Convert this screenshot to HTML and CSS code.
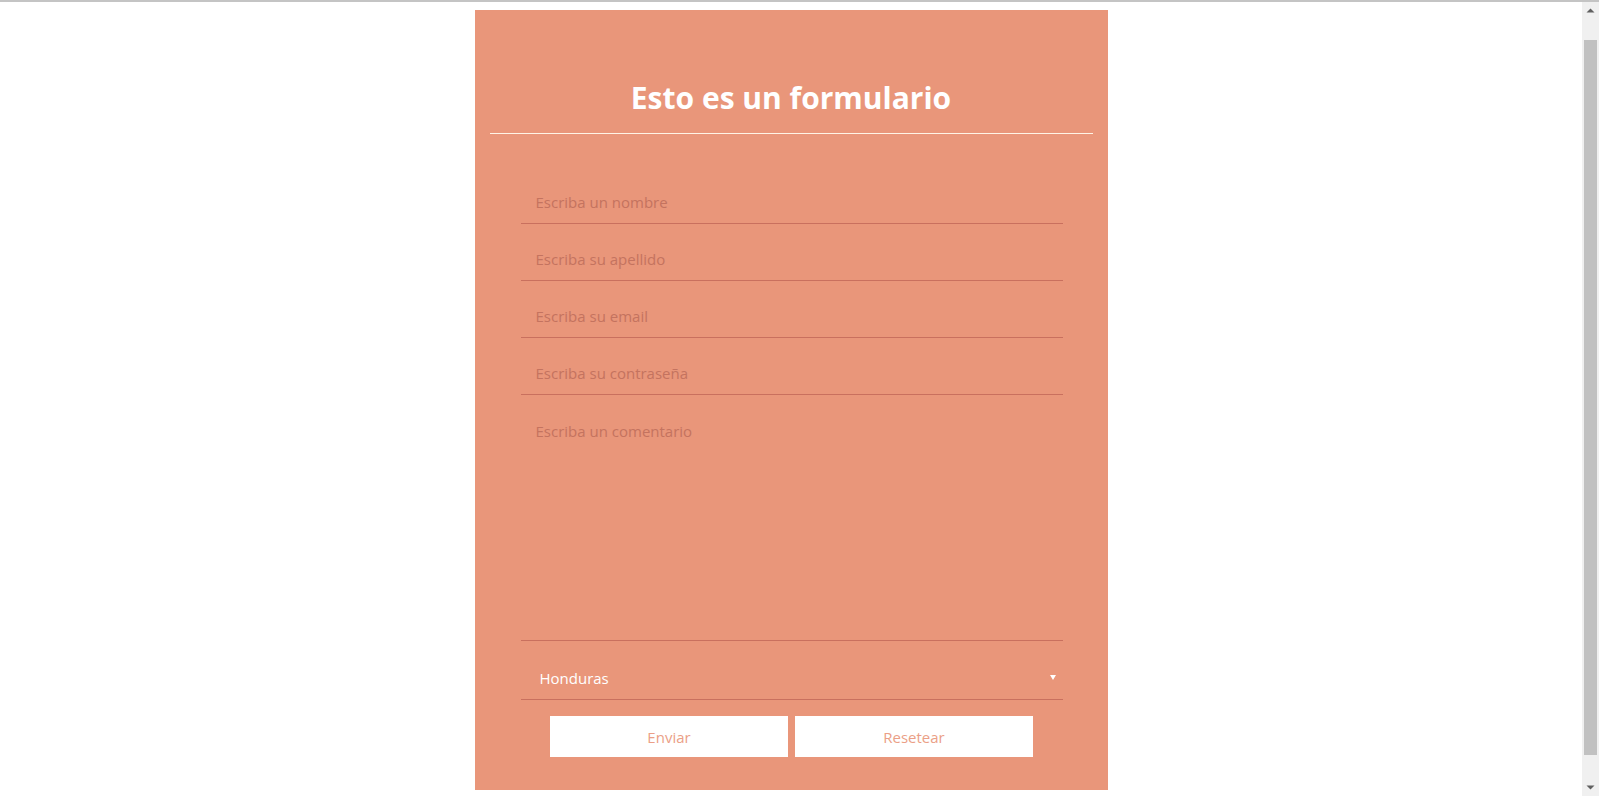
FILE: index.html
```html
<!DOCTYPE html>
<html lang="es">
<head>
<meta charset="utf-8">
<title>Formulario</title>
<link rel="stylesheet" href="styles.css">
</head>
<body>
<div class="window">
  <main class="page">
    <div class="card">
      <h1 class="title">Esto es un formulario</h1>
      <form class="form">
        <input class="field" type="text" placeholder="Escriba un nombre">
        <input class="field" type="text" placeholder="Escriba su apellido">
        <input class="field" type="email" placeholder="Escriba su email">
        <input class="field" type="password" placeholder="Escriba su contraseña">
        <textarea class="comment" placeholder="Escriba un comentario"></textarea>
        <div class="select-wrap">
          <select class="country">
            <option>Honduras</option>
            <option>Guatemala</option>
            <option>El Salvador</option>
          </select>
        </div>
        <div class="actions">
          <button class="btn" type="submit">Enviar</button>
          <button class="btn" type="reset">Resetear</button>
        </div>
      </form>
    </div>
  </main>
  <div class="scrollbar" aria-hidden="true">
    <div class="sb-btn">
      <svg width="17" height="17" viewBox="0 0 17 17"><path d="M4.5 10.5 L8.5 6.5 L12.5 10.5 Z" fill="#606060"/></svg>
    </div>
    <div class="sb-track"><div class="sb-thumb"></div></div>
    <div class="sb-btn">
      <svg width="17" height="17" viewBox="0 0 17 17"><path d="M4.5 6.5 L8.5 10.5 L12.5 6.5 Z" fill="#606060"/></svg>
    </div>
  </div>
</div>
</body>
</html>
```
FILE: styles.css
```css
html {
  border-top: 2px solid #c4c4c4;
  background: #ffffff;
  overflow: hidden;
}
body {
  margin: 0;
  font-family: "Open Sans", "Noto Sans", sans-serif;
}
.window {
  display: flex;
  height: 794px;
}
.page {
  flex: 1;
  min-width: 0;
  padding: 8px;
  overflow: hidden;
}
.scrollbar {
  width: 17px;
  flex: none;
  display: flex;
  flex-direction: column;
  background: #f0f0f0;
}
.sb-btn {
  height: 17px;
  flex: none;
}
.sb-btn svg {
  display: block;
}
.sb-track {
  flex: 1;
}
.sb-thumb {
  margin: 21px 2px 0;
  height: 715px;
  background: #c1c1c1;
}
.card {
  width: 633px;
  box-sizing: border-box;
  margin: 0 auto;
  background: #e9967a;
  padding: 0 15px 33px;
}
.title {
  margin: 0;
  padding: 68px 0 15px;
  line-height: 40px;
  font-size: 30px;
  font-weight: 700;
  color: #ffffff;
  text-align: center;
  border-bottom: 1px solid #fff4e6;
}
.form {
  margin: 50px 0 0;
  padding: 0 30px 0 31px;
}
.field,
.comment,
.country {
  display: block;
  width: 100%;
  box-sizing: border-box;
  border: 0;
  border-bottom: 1px solid #c9705e;
  background: transparent;
  font-family: "Open Sans", "Noto Sans", sans-serif;
  font-size: 15px;
  color: #ffffff;
  outline: none;
}
.field {
  height: 40px;
  padding: 0 15px 4px;
  margin-bottom: 17px;
}
.comment {
  height: 229px;
  padding: 9px 15px;
  line-height: 20px;
  resize: none;
}
.field::placeholder,
.comment::placeholder {
  color: #c4735f;
  opacity: 1;
}
.select-wrap {
  position: relative;
  margin-top: 17px;
}
.country {
  height: 42px;
  padding: 0 19px 2px;
  -webkit-appearance: none;
  appearance: none;
  border-radius: 0;
}
.select-wrap::after {
  content: "";
  position: absolute;
  right: 7px;
  top: 17px;
  border-left: 3px solid transparent;
  border-right: 3px solid transparent;
  border-top: 5px solid #ffffff;
}
.actions {
  display: flex;
  justify-content: center;
  gap: 7px;
  margin-top: 16px;
}
.btn {
  width: 238px;
  height: 41px;
  border: 0;
  background: #ffffff;
  color: #eb9f87;
  font-family: "Open Sans", "Noto Sans", sans-serif;
  font-size: 15px;
  cursor: pointer;
}
```
